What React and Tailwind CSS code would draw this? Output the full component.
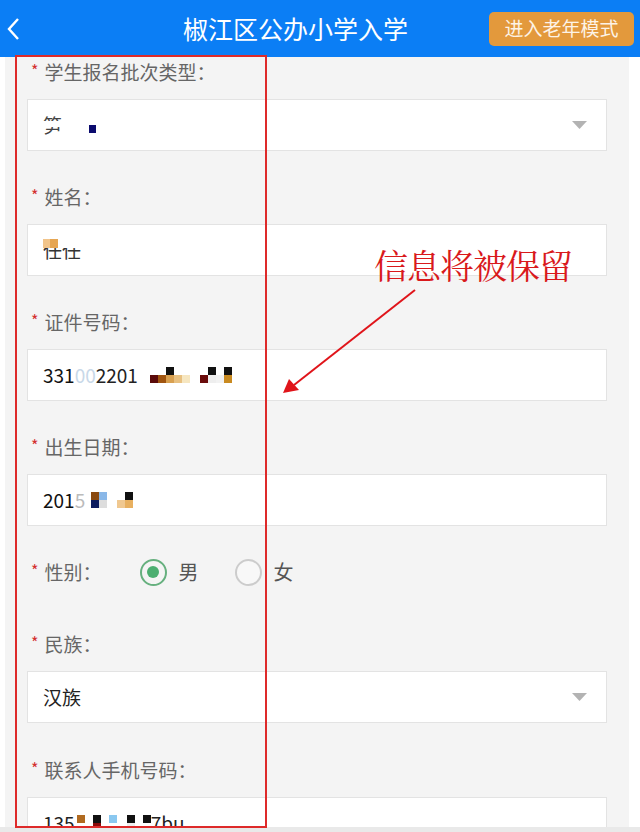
import React from "react";

const font = { fontFamily: '"Noto Sans CJK SC", "Noto Sans", sans-serif' };

function Label({ children }) {
  return (
    <div className="flex h-[28px] items-center pl-[26px] text-[19px] text-[#666]">
      <span className="mr-[6px] text-[16px] text-[#d32f2f] leading-none mt-[-4px]">*</span>
      <span>{children}</span>
    </div>
  );
}

function Box({ children, select }) {
  return (
    <div className="mx-[22px] mt-[13px] flex h-[52px] items-center justify-between border border-[#e3e3e3] bg-white pl-[15px] pr-[19px] text-[19px] text-[#222]">
      <div className="flex items-center">{children}</div>
      {select && (
        <svg width="15" height="8" viewBox="0 0 15 8">
          <polygon points="0,0 15,0 7.5,8" fill="#b3b3b3" />
        </svg>
      )}
    </div>
  );
}

function Sq({ c, w = 8, h = 8 }) {
  return <span className="inline-block" style={{ background: c || "transparent", width: w, height: h }} />;
}

function Mosaic({ cols, ml = 0 }) {
  return (
    <span className="flex items-center" style={{ marginLeft: ml }}>
      {cols.map((col, i) =>
        col === "gap" ? (
          <span key={i} className="inline-block w-[10px]" />
        ) : (
          <span key={i} className="flex flex-col">
            <Sq c={col[0]} />
            <Sq c={col[1]} />
          </span>
        )
      )}
    </span>
  );
}

export default function App() {
  return (
    <div className="relative h-[832px] w-[640px] overflow-hidden bg-white" style={font}>
      {/* header */}
      <div className="flex h-[57px] items-center bg-[#0b7ef5]">
        <svg className="ml-[7px]" width="12" height="24" viewBox="0 0 12 24">
          <polyline points="11,2 2,12 11,22" fill="none" stroke="white" strokeWidth="2.4" />
        </svg>
        <div className="ml-[164px] text-[25px] text-white">椒江区公办小学入学</div>
        <div className="flex-1" />
        <div className="mr-[6px] flex h-[34px] w-[145px] items-center justify-center rounded-[5px] bg-[#e3993c] text-[19px] text-[#fdf3e6]">
          进入老年模式
        </div>
      </div>

      {/* form body */}
      <div className="ml-[5px] mr-[11px] bg-[#f4f4f4] pt-[1px] pb-[20px]">
        <Label>学生报名批次类型：</Label>
        <Box select>
          <span className="relative text-[#444]">
            笋一
            <span className="absolute left-0 top-[10px] h-[6px] w-[40px] bg-white" />
          </span>
          <span className="ml-[8px]"><Sq c="#0b0b6e" w={7} h={8} /></span>
        </Box>

        <div className="mt-[32px]" />
        <Label>姓名：</Label>
        <Box>
          <span className="relative text-[#333]">
            任任
            <span className="absolute left-0 top-0 h-[12px] w-[40px] bg-white" />
            <span className="absolute left-0 top-[3px] flex">
              <Sq c="#f1c48a" w={7} h={9} />
              <Sq c="#e6a653" w={8} h={9} />
            </span>
          </span>
        </Box>

        <div className="mt-[32px]" />
        <Label>证件号码：</Label>
        <Box>
          <span className="text-[#111]">331</span>
          <span className="text-[#c8d8e8]">00</span>
          <span className="text-[#222]">2201</span>
          <Mosaic
            ml={12}
            cols={[
              [null, "#5a0a0a"],
              [null, "#a05510"],
              ["#111", "#d8a050"],
              [null, "#e8c080"],
              [null, "#f6e6c0"],
              "gap",
              [null, "#6a0b0b"],
              ["#111", "#eee"],
              [null, "#f2f2f2"],
              ["#111", "#c98a20"],
            ]}
          />
        </Box>

        <div className="mt-[32px]" />
        <Label>出生日期：</Label>
        <Box>
          <span className="text-[#111]">201</span>
          <span className="text-[#bbb]">5</span>
          <Mosaic
            ml={6}
            cols={[
              ["#8a4a10", "#0b1b5e"],
              ["#8ab8e8", "#ddd"],
              "gap",
              [null, "#f0c890"],
              ["#111", "#e8b060"],
            ]}
          />
        </Box>

        <div className="mt-[32px] flex h-[28px] items-center">
          <Label>性别：</Label>
          <div className="ml-[38px] flex h-[27px] w-[27px] items-center justify-center rounded-full border-2 border-[#66b07e]">
            <div className="h-[12px] w-[12px] rounded-full bg-[#4cae70]" />
          </div>
          <span className="ml-[12px] text-[20px] text-[#555]">男</span>
          <div className="ml-[36px] h-[27px] w-[27px] rounded-full border-2 border-[#cccccc] bg-[#f8f8f8]" />
          <span className="ml-[12px] text-[20px] text-[#555]">女</span>
        </div>

        <div className="mt-[44px]" />
        <Label>民族：</Label>
        <Box select>
          <span className="text-[#222]">汉族</span>
        </Box>

        <div className="mt-[33px]" />
        <Label>联系人手机号码：</Label>
        <Box>
          <span className="flex items-center text-[#222]">
            <span>135</span>
            <Mosaic
              ml={2}
              cols={[
                ["#b06a20", "#fff"],
                [null, null],
                ["#111", "#8a0a0a"],
                [null, null],
                ["#8ac8f0", "#fff"],
                "gap",
                ["#111", "#eee"],
                [null, null],
                ["#111", "#fff"],
              ]}
            />
            <span>7bu</span>
          </span>
        </Box>
      </div>

      {/* bottom strip */}
      <div className="absolute bottom-0 left-0 h-[5px] w-full bg-[#e9e9e9]" />

      {/* annotation red box */}
      <div className="pointer-events-none absolute left-[15px] top-[55px] h-[773px] w-[252px] border-2 border-[#de2a2a]" />

      {/* annotation text */}
      <div
        className="absolute left-[374px] top-[248px] text-[34px] text-[#d9191c] leading-none tracking-[-1px]"
        style={{ fontFamily: '"Noto Serif CJK SC", "Liberation Serif", serif' }}
      >
        信息将被保留
      </div>

      {/* arrow */}
      <svg className="absolute left-0 top-0" width="640" height="832" viewBox="0 0 640 832">
        <line x1="415" y1="290" x2="294" y2="385" stroke="#e0141a" strokeWidth="2" />
        <polygon points="283,393 289,379 299,390" fill="#e0141a" />
      </svg>
    </div>
  );
}
